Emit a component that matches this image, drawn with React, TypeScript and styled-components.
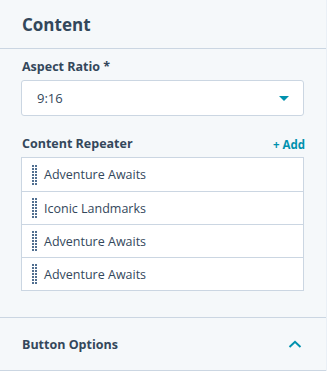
import React from 'react';
import styled, { createGlobalStyle } from 'styled-components';

const GlobalStyle = createGlobalStyle`
    html, body {
        margin: 0;
        padding: 0;
        background: #f5f8fa;
    }
    body {
        font-family: "Open Sans", "Noto Sans", sans-serif;
        color: #33475b;
    }
`;

const items = ['Adventure Awaits', 'Iconic Landmarks', 'Adventure Awaits', 'Adventure Awaits'];

const DragHandle: React.FC = () => (
    <svg width="5" height="22" viewBox="0 0 5 22">
        {Array.from({ length: 7 }).map((_, i) => (
            <React.Fragment key={i}>
                <rect x="0" y={i * 3 + 1} width="2" height="2" fill="#516f90" />
                <rect x="3" y={i * 3 + 1} width="2" height="2" fill="#516f90" />
            </React.Fragment>
        ))}
    </svg>
);

const App: React.FC = () => {
    return (
        <Panel>
            <GlobalStyle />
            <Header>
                <Title>Content</Title>
            </Header>
            <Body>
                <Field>
                    <Label>Aspect Ratio *</Label>
                    <Select>
                        <span>9:16</span>
                        <Caret />
                    </Select>
                </Field>
                <Field>
                    <LabelRow>
                        <Label>Content Repeater</Label>
                        <AddLink>+ Add</AddLink>
                    </LabelRow>
                    <List>
                        {items.map((item, i) => (
                            <Item key={i}>
                                <DragHandle />
                                <span>{item}</span>
                            </Item>
                        ))}
                    </List>
                </Field>
            </Body>
            <Section>
                <SectionTitle>Button Options</SectionTitle>
                <svg width="14" height="8" viewBox="0 0 14 8">
                    <path d="M1.5 7 L7 1.8 L12.5 7" fill="none" stroke="#0091ae" strokeWidth="2" />
                </svg>
            </Section>
        </Panel>
    );
};

export default App;

const Panel = styled.div`
    width: 326px;
    height: 371px;
    border-right: 1px solid #eaf0f6;
    background: #f5f8fa;
    display: flex;
    flex-direction: column;
    overflow: hidden;
`;

const Header = styled.div`
    height: 49px;
    border-bottom: 1px solid #cbd6e2;
    padding: 0 22px;
    display: flex;
    align-items: center;
    box-sizing: border-box;
    flex-shrink: 0;
`;

const Title = styled.h1`
    margin: 0;
    font-size: 17px;
    font-weight: 700;
    color: #33475b;
`;

const Body = styled.div`
    padding: 10px 22px 26px 21px;
    display: flex;
    flex-direction: column;
    gap: 20px;
    border-bottom: 1px solid #cbd6e2;
`;

const Field = styled.div`
    display: flex;
    flex-direction: column;
    gap: 5px;
`;

const LabelRow = styled.div`
    display: flex;
    justify-content: space-between;
    align-items: center;
`;

const Label = styled.div`
    font-size: 12.5px;
    font-weight: 700;
    line-height: 16px;
    color: #33475b;
    padding-left: 1px;
`;

const AddLink = styled.a`
    font-size: 11.5px;
    font-weight: 700;
    color: #0091ae;
    cursor: pointer;
    margin-right: -1px;
`;

const Select = styled.div`
    height: 36px;
    box-sizing: border-box;
    background: #fff;
    border: 1px solid #cbd6e2;
    border-radius: 3px;
    padding: 0 14px 0 15px;
    display: flex;
    align-items: center;
    justify-content: space-between;
    font-size: 13px;
    color: #33475b;
`;

const Caret = styled.span`
    width: 0;
    height: 0;
    border-left: 5px solid transparent;
    border-right: 5px solid transparent;
    border-top: 5px solid #0091ae;
`;

const List = styled.div`
    background: #fff;
    border: 1px solid #cbd6e2;
`;

const Item = styled.div`
    height: 33px;
    box-sizing: border-box;
    display: flex;
    align-items: center;
    gap: 7px;
    padding-left: 10px;
    font-size: 12.5px;
    color: #33475b;
    & + & {
        border-top: 1px solid #cbd6e2;
    }
`;

const Section = styled.div`
    height: 53px;
    box-sizing: border-box;
    padding: 0 24px 0 22px;
    display: flex;
    align-items: center;
    justify-content: space-between;
    border-bottom: 1px solid #cbd6e2;
`;

const SectionTitle = styled.div`
    font-size: 12.5px;
    font-weight: 700;
    color: #33475b;
`;
